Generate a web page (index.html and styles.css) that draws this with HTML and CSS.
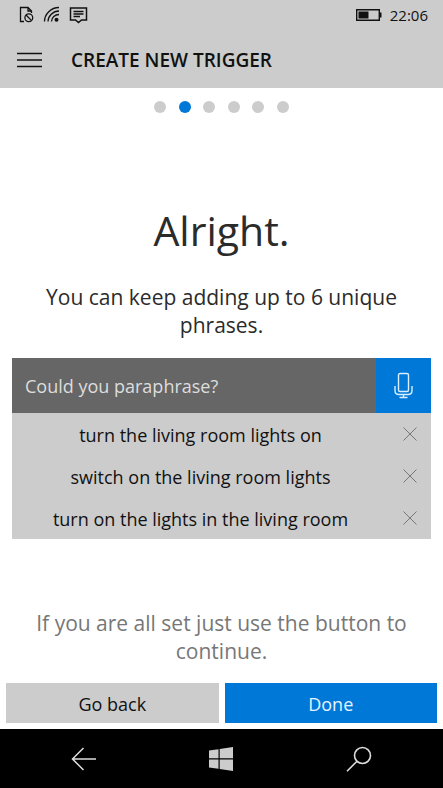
FILE: index.html
```html
<!DOCTYPE html>
<html lang="en">
<head>
<meta charset="utf-8">
<meta name="viewport" content="width=device-width, initial-scale=1">
<title>Create new trigger</title>
<link rel="stylesheet" href="styles.css">
</head>
<body>
<header class="top">
  <div class="status">
    <div class="status-icons">
      <svg width="16" height="18" viewBox="0 0 16 18" fill="none" stroke="#111" stroke-width="1.3"><path d="M5 15.5H1.5V1.5H9L12.500 5V7M9 1.500V5H12.500"/><circle cx="9.800" cy="11.800" r="3.900"/><path d="M7 9l5.600 5.600"/></svg>
      <svg width="18" height="18" viewBox="0 0 18 18" fill="none" stroke="#111" stroke-width="1.3"><path d="M1.500 15.500C1.500 8 8 1.500 16 1.500M5 15.500C5 10 10 5 16 5M8.500 15.500C8.500 11.500 12 8.500 16 8.500"/><circle cx="13.500" cy="13.800" r="2" fill="#111" stroke="none"/></svg>
      <svg width="20" height="18" viewBox="0 0 20 18" fill="none" stroke="#111" stroke-width="1.500"><path d="M1.500 2H17.500V14H12.500L9.500 16.500L6.500 14H1.500ZM4.500 5.500H14.500M4.500 8H14.500M4.500 10.500H11"/></svg>
    </div>
    <div class="status-right">
      <svg width="27" height="14" viewBox="0 0 27 14"><path d="M1.700 1.700H24.300V12.300H1.700Z" fill="none" stroke="#111" stroke-width="1.400"/><path d="M3.500 3.500H13.500V10.500H3.500ZM24.500 4.500H26.500V9.500H24.500Z" fill="#111"/></svg>
      <time>22:06</time>
    </div>
  </div>
  <div class="title-bar">
    <button class="icon-button menu" aria-label="Menu"><svg width="25" height="16" viewBox="0 0 25 16" fill="none" stroke="#111" stroke-width="1.500"><path d="M0 1.500H25M0 8H25M0 14.500H25"/></svg></button>
    <h1>CREATE NEW TRIGGER</h1>
  </div>
</header>
<main>
  <div class="steps" role="img" aria-label="Step 2 of 6"><i></i><i class="current"></i><i></i><i></i><i></i><i></i></div>
  <h2>Alright.</h2>
  <p class="message">You can keep adding up to 6 unique phrases.</p>
  <section class="panel">
    <div class="entry">
      <input type="text" placeholder="Could you paraphrase?" aria-label="Could you paraphrase?">
      <button class="icon-button mic" aria-label="Speak"><svg width="20" height="28" viewBox="0 0 20 28" fill="none" stroke="#d9efff" stroke-width="1.400"><rect x="4.500" y="1.500" width="10" height="18" rx="1.500"/><path d="M1 14V18.500Q1 22.500 5 22.500H14Q18 22.500 18 18.500V14M9.500 22.500V25.500M5.500 25.500H13.500"/></svg></button>
    </div>
    <ul>
      <li><span>turn the living room lights on</span><button class="icon-button remove" aria-label="Remove turn the living room lights on"><svg width="14" height="14" viewBox="0 0 14 14"><path d="M.5.5l13 13M13.500.5l-13 13"/></svg></button></li>
      <li><span>switch on the living room lights</span><button class="icon-button remove" aria-label="Remove switch on the living room lights"><svg width="14" height="14" viewBox="0 0 14 14"><path d="M.5.5l13 13M13.500.5l-13 13"/></svg></button></li>
      <li><span>turn on the lights in the living room</span><button class="icon-button remove" aria-label="Remove turn on the lights in the living room"><svg width="14" height="14" viewBox="0 0 14 14"><path d="M.5.5l13 13M13.500.5l-13 13"/></svg></button></li>
    </ul>
  </section>
  <p class="message hint">If you are all set just use the button to continue.</p>
</main>
<div class="actions">
  <button>Go back</button>
  <button class="primary">Done</button>
</div>
<nav>
  <button class="icon-button" aria-label="Back"><svg width="26" height="24" viewBox="0 0 26 24" fill="none" stroke="#ddd" stroke-width="1.500"><path d="M25 12H1.500M12.500 1L1.500 12L12.500 23"/></svg></button>
  <button class="icon-button" aria-label="Start"><svg width="24" height="24" viewBox="0 0 24 24" fill="#ccc"><path d="M0 3.500L9.500 2.200V11.300H0ZM10.700 2L24 0V11.300H10.700ZM0 12.500H9.500V21.800L0 20.500ZM10.700 12.500H24V24L10.700 22Z"/></svg></button>
  <button class="icon-button" aria-label="Search"><svg width="26" height="26" viewBox="0 0 26 26" fill="none" stroke="#ddd" stroke-width="1.600"><circle cx="16.500" cy="9.500" r="8"/><path d="M11 15.200L1 25.200"/></svg></button>
</nav>
</body>
</html>
```
FILE: styles.css
```css
* {
  box-sizing: border-box;
}

body {
  margin: 0;
  min-height: 100vh;
  display: flex;
  flex-direction: column;
  background: #fff;
  color: #111;
  font-family: "Open Sans", "Noto Sans", sans-serif;
}

h1, h2, p, ul {
  margin: 0;
  padding: 0;
}

button, input {
  font: inherit;
  color: inherit;
  border: 0;
  border-radius: 0;
  padding: 0;
}

svg {
  display: block;
}

.icon-button {
  display: flex;
  align-items: center;
  justify-content: center;
  background: none;
}

.top {
  background: #ccc;
}

.status {
  height: 32px;
  padding: 0 15px 2px 19px;
  display: flex;
  align-items: center;
  justify-content: space-between;
  font-size: 15px;
}

.status-icons {
  display: flex;
  gap: 8px;
}

.status-right {
  display: flex;
  align-items: center;
  gap: 8px;
}

.title-bar {
  height: 56px;
  display: flex;
  align-items: center;
  gap: 16px;
  padding-left: 4px;
}

.menu {
  width: 51px;
  height: 48px;
}

h1 {
  font-size: 19px;
  font-weight: 600;
}

main {
  flex: 1;
  padding: 0 12px;
}

.steps {
  width: 135px;
  margin: 13px auto 0;
  display: flex;
  justify-content: space-between;
}

.steps i {
  width: 12px;
  height: 12px;
  border-radius: 50%;
  background: #ccc;
}

.steps .current {
  background: #0078d7;
}

h2 {
  margin-top: 89px;
  font-size: 41px;
  line-height: 56px;
  font-weight: 400;
  text-align: center;
  color: #2b2b2b;
}

.message {
  margin-top: 25px;
  padding: 0 16px;
  font-size: 21px;
  line-height: 28px;
  text-align: center;
  color: #2b2b2b;
}

.panel {
  margin-top: 19px;
  background: #ccc;
  font-size: 18px;
}

.entry {
  display: flex;
  height: 55px;
}

.entry input {
  flex: 1;
  min-width: 0;
  padding: 0 13px;
  background: #666;
  color: #fff;
}

.entry input::placeholder {
  color: #ddd;
  opacity: 1;
}

.mic {
  width: 55px;
  background: #0078d7;
}

ul {
  list-style: none;
}

li {
  display: flex;
  align-items: center;
  height: 42px;
}

li span {
  flex: 1;
  padding-top: 2px;
  text-align: center;
}

.remove {
  width: 42px;
  height: 42px;
}

.remove path {
  fill: none;
  stroke: #777;
}

.hint {
  margin-top: 70px;
  color: #777;
}

.actions {
  display: flex;
  gap: 6px;
  padding: 0 6px 6px;
}

.actions button {
  flex: 1;
  height: 40px;
  padding-top: 2px;
  background: #ccc;
  font-size: 18px;
}

.actions .primary {
  background: #0078d7;
  color: #e6f4ff;
}

nav {
  display: flex;
  justify-content: space-around;
  padding: 0 15px;
  background: #000;
}

nav button {
  width: 60px;
  height: 59px;
}
```
